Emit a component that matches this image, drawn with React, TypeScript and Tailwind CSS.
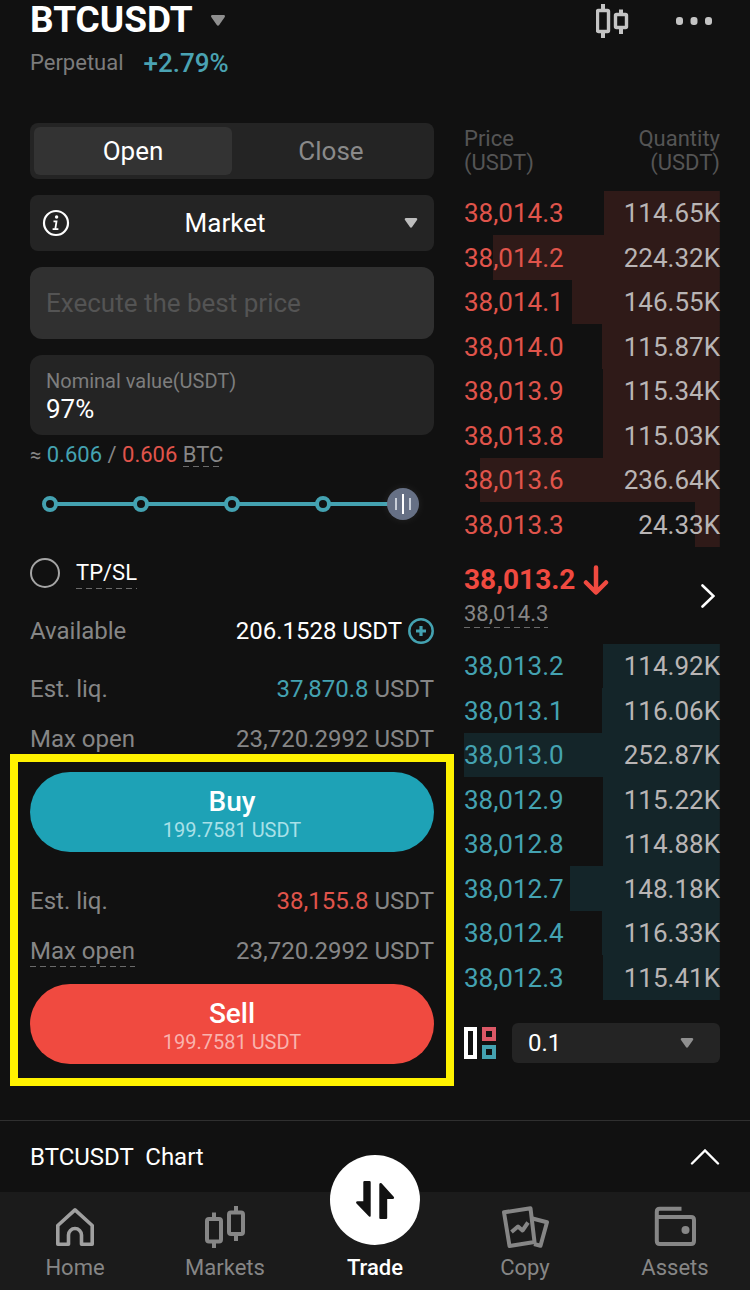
import { useState } from "react";
import type { ReactNode } from "react";

interface BookRow {
  price: string;
  quantity: number;
}

const ASKS: BookRow[] = [
  { price: "38,014.3", quantity: 114.65 },
  { price: "38,014.2", quantity: 224.32 },
  { price: "38,014.1", quantity: 146.55 },
  { price: "38,014.0", quantity: 115.87 },
  { price: "38,013.9", quantity: 115.34 },
  { price: "38,013.8", quantity: 115.03 },
  { price: "38,013.6", quantity: 236.64 },
  { price: "38,013.3", quantity: 24.33 },
];

const BIDS: BookRow[] = [
  { price: "38,013.2", quantity: 114.92 },
  { price: "38,013.1", quantity: 116.06 },
  { price: "38,013.0", quantity: 252.87 },
  { price: "38,012.9", quantity: 115.22 },
  { price: "38,012.8", quantity: 114.88 },
  { price: "38,012.7", quantity: 148.18 },
  { price: "38,012.4", quantity: 116.33 },
  { price: "38,012.3", quantity: 115.41 },
];

const MAX_QUANTITY = Math.max(...[...ASKS, ...BIDS].map((r) => r.quantity));

const STOPS = [0, 25, 50, 75];

function Caret({ className }: { className: string }) {
  return (
    <svg viewBox="0 0 14 11" className={className} aria-hidden>
      <path
        d="M1.5 0h11c1.3 0 1.9 1.2 1.1 2.2L8.2 10c-.6.9-1.8.9-2.4 0L.4 2.2C-.4 1.2.2 0 1.5 0z"
        fill="currentColor"
      />
    </svg>
  );
}

function Dashed({ children }: { children: ReactNode }) {
  return (
    <span className="inline-block bg-[repeating-linear-gradient(90deg,#6a6a6a_0_6px,transparent_6px_10px)] bg-[length:100%_1px] bg-bottom bg-no-repeat">
      {children}
    </span>
  );
}

function Header() {
  return (
    <header className="flex items-start justify-between px-[30px] pb-[45px]">
      <div>
        <button className="flex items-center gap-[18px] text-[37px] leading-10 font-bold text-white">
          BTCUSDT
          <Caret className="h-[11px] w-[14px] text-[#8f8f8f]" />
        </button>
        <div className="mt-2 flex items-center gap-5 leading-[30px]">
          <span className="text-[22px] text-[#7c7c7c]">Perpetual</span>
          <span className="text-[26px] font-medium text-[#4aa3b3]">+2.79%</span>
        </div>
      </div>
      <div className="flex h-[42px] items-center gap-[46px] pr-2 text-[#c4c4c4]">
        <button aria-label="Candlestick chart">
          <svg viewBox="0 0 34 36" className="h-9 w-[34px]" fill="none" stroke="currentColor">
            <rect x="1.5" y="7.5" width="11" height="21" rx="1" strokeWidth="3.4" />
            <rect x="19.5" y="11.5" width="11" height="13" rx="1" strokeWidth="3.4" />
            <path d="M7 1v6M7 29v6M25 6.500v5M25 25v6" strokeWidth="4" />
          </svg>
        </button>
        <button aria-label="More">
          <svg viewBox="0 0 36 8" className="h-2 w-9" fill="currentColor">
            <rect x="0" y="0" width="7" height="8" rx="3" />
            <rect x="14.500" y="0" width="7" height="8" rx="3" />
            <rect x="29" y="0" width="7" height="8" rx="3" />
          </svg>
        </button>
      </div>
    </header>
  );
}

interface StatRowProps {
  label: ReactNode;
  children: ReactNode;
}

function StatRow({ label, children }: StatRowProps) {
  return (
    <div className="flex h-8 items-center justify-between text-2xl leading-8 text-[#868686]">
      <span>{label}</span>
      <span>{children}</span>
    </div>
  );
}

function PercentSlider({ value, onChange }: { value: number; onChange: (v: number) => void }) {
  return (
    <div className="relative mx-5 mt-[19px] flex h-8 items-center">
      <div className="h-1 w-full">
        <div className="h-1 bg-[#44a2b1]" style={{ width: `${value}%` }} />
      </div>
      {STOPS.map((stop) => (
        <span
          key={stop}
          className="absolute size-4 -translate-x-1/2 rounded-full border-4 border-[#44a2b1] bg-[#111111]"
          style={{ left: `${stop}%` }}
        />
      ))}
      <span
        className="absolute flex size-8 -translate-x-1/2 items-center justify-center gap-[5px] rounded-full bg-[#667085] shadow-[0_0_10px_rgba(255,255,255,0.08)]"
        style={{ left: `${value}%` }}
      >
        <span className="h-3 w-0.5 bg-[#c8ced8]" />
        <span className="h-5 w-0.5 bg-white" />
        <span className="h-3 w-0.5 bg-[#c8ced8]" />
      </span>
      <input
        type="range"
        min={0}
        max={100}
        value={value}
        onChange={(e) => onChange(Number(e.target.value))}
        aria-label="Position size"
        className="absolute inset-0 w-full cursor-pointer opacity-0"
      />
    </div>
  );
}

function OrderForm() {
  const [side, setSide] = useState("Open");
  const [percent, setPercent] = useState(97);

  return (
    <section className="min-w-0" aria-label="Order">
      <div className="grid h-14 grid-cols-2 rounded-lg bg-[#242424] p-1 text-[26px]">
        {["Open", "Close"].map((name) => (
          <button
            key={name}
            onClick={() => setSide(name)}
            className={
              side === name
                ? "rounded-md bg-[#333333] text-white"
                : "rounded-md text-[#8a8a8a]"
            }
          >
            {name}
          </button>
        ))}
      </div>

      <div className="relative mt-4">
        <select
          aria-label="Order type"
          className="h-14 w-full appearance-none rounded-lg bg-[#242424] pr-[14px] text-[26px] text-white [text-align-last:center]"
        >
          <option>Market</option>
        </select>
        <svg
          viewBox="0 0 28 28"
          className="pointer-events-none absolute top-[14px] left-3 size-7 text-white"
          fill="none"
          stroke="currentColor"
          aria-hidden
        >
          <circle cx="14" cy="14" r="12" strokeWidth="2.200" />
          <circle cx="14.600" cy="8" r="1.700" fill="currentColor" stroke="none" />
          <path d="M11.500 12.300h3l-1.200 7.700M10.600 20.200h5.800" strokeWidth="1.800" />
        </svg>
        <Caret className="pointer-events-none absolute top-[23px] right-4 h-[10px] w-[14px] text-[#bdbdbd]" />
      </div>

      <input
        type="text"
        disabled
        aria-label="Price"
        placeholder="Execute the best price"
        className="mt-4 block h-[72px] w-full rounded-xl bg-[#303030] px-4 text-[26px] placeholder:text-[#545454]"
      />

      <div className="mt-4 h-20 rounded-xl bg-[#242424] px-4 pt-3">
        <label htmlFor="nominal" className="block text-xl leading-7 text-[#7d7d7d]">
          Nominal value(USDT)
        </label>
        <input
          id="nominal"
          type="text"
          value={`${percent}%`}
          onChange={(e) => setPercent(Math.min(100, parseInt(e.target.value, 10) || 0))}
          className="block h-7 w-full bg-transparent text-[26px] text-white outline-none"
        />
      </div>

      <p className="mt-1.5 text-[22px] leading-6 text-[#868686]">
        <span className="text-xl">≈</span> <span className="text-[#44a2b1]">0.606</span> /{" "}
        <span className="text-[#e0544b]">0.606</span> <Dashed>BTC</Dashed>
      </p>

      <PercentSlider value={percent} onChange={setPercent} />

      <label className="mt-[37px] flex h-8 items-center gap-4 text-[22px] leading-8 text-white">
        <input
          type="checkbox"
          className="size-[30px] appearance-none rounded-full border-2 border-[#a5a5a5] checked:bg-[#1ea2b6]"
        />
        <Dashed>TP/SL</Dashed>
      </label>

      <div className="mt-[26px]">
        <StatRow label="Available">
          <span className="flex items-center gap-[6px] text-white">
            206.1528 USDT
            <button aria-label="Deposit" className="text-[#44a2b1]">
              <svg viewBox="0 0 26 26" className="size-[26px]" fill="none" stroke="currentColor">
                <circle cx="13" cy="13" r="11.700" strokeWidth="2.500" />
                <path d="M13 8v10M8 13h10" strokeWidth="3.200" />
              </svg>
            </button>
          </span>
        </StatRow>
      </div>

      <div className="mt-[26px] mb-[17px] flex flex-col gap-[18px]">
        <StatRow label="Est. liq.">
          <span className="text-[#44a2b1]">37,870.8</span> USDT
        </StatRow>
        <StatRow label="Max open">23,720.2992 USDT</StatRow>
      </div>

      <div className="relative">
        <button className="block h-20 w-full rounded-full bg-[#1ea2b6] pt-1">
          <span className="block text-[28px] leading-8 font-medium text-white">Buy</span>
          <span className="block text-xl leading-6 text-[#a9e0e8]">199.7581 USDT</span>
        </button>
        <div className="mt-[33px] mb-[17px] flex flex-col gap-[18px]">
          <StatRow label="Est. liq.">
            <span className="text-[#e0544b]">38,155.8</span> USDT
          </StatRow>
          <StatRow label={<Dashed>Max open</Dashed>}>23,720.2992 USDT</StatRow>
        </div>
        <button className="block h-20 w-full rounded-full bg-[#f04a40] pt-1">
          <span className="block text-[28px] leading-8 font-medium text-white">Sell</span>
          <span className="block text-xl leading-6 text-[#f9b3ae]">199.7581 USDT</span>
        </button>
        {/* highlight frame over both order buttons */}
        <div className="pointer-events-none absolute -inset-x-5 -top-[18px] -bottom-[22px] border-8 border-[#fff200]" />
      </div>
    </section>
  );
}

function BookRows({ rows, bar, text }: { rows: BookRow[]; bar: string; text: string }) {
  return (
    <tbody className="text-[26px] leading-8">
      {rows.map((row) => {
        const pct = (row.quantity / MAX_QUANTITY) * 100;
        return (
          <tr
            key={row.price}
            className="h-11 even:h-[45px]"
            style={{
              backgroundImage: `linear-gradient(to left, ${bar} ${pct}%, transparent ${pct}%)`,
            }}
          >
            <td className={text}>{row.price}</td>
            <td className="text-right text-[#b9b5b5]">{row.quantity.toFixed(2)}K</td>
          </tr>
        );
      })}
    </tbody>
  );
}

function OrderBook() {
  return (
    <section className="min-w-0" aria-label="Order book">
      <table className="w-full border-collapse">
        <thead className="text-[22px] leading-6 text-[#555555]">
          <tr>
            <th className="pt-1 pb-4 text-left font-normal">
              Price
              <br />
              (USDT)
            </th>
            <th className="pt-1 pb-4 text-right font-normal">
              Quantity
              <br />
              (USDT)
            </th>
          </tr>
        </thead>
        <BookRows rows={ASKS} bar="#2f1a18" text="text-[#e0544b]" />
        <tbody>
          <tr className="h-[97px]">
            <td colSpan={2} className="align-top">
              <div className="flex items-center justify-between pt-[17px]">
                <div>
                  <div className="flex items-center gap-2 text-[28px] leading-8 font-bold text-[#f04a40]">
                    38,013.2
                    <svg
                      viewBox="0 0 26 30"
                      className="h-[30px] w-[26px]"
                      fill="none"
                      stroke="currentColor"
                      strokeWidth="4.500"
                      strokeLinecap="round"
                      strokeLinejoin="round"
                      aria-hidden
                    >
                      <path d="M13 2.500v24M3 17.500l10 10 10-10" />
                    </svg>
                  </div>
                  <div className="mt-1 text-[22px] leading-7 text-[#868686]">
                    <Dashed>38,014.3</Dashed>
                  </div>
                </div>
                <button aria-label="Full order book" className="pr-[5px] text-white">
                  <svg
                    viewBox="0 0 14 24"
                    className="h-6 w-[14px]"
                    fill="none"
                    stroke="currentColor"
                    strokeWidth="2.600"
                    strokeLinecap="round"
                  >
                    <path d="M1.500 1.500L12.500 12L1.500 22.500" />
                  </svg>
                </button>
              </div>
            </td>
          </tr>
        </tbody>
        <BookRows rows={BIDS} bar="#142529" text="text-[#44a2b1]" />
      </table>

      <div className="mt-[23px] flex items-center gap-4">
        <button aria-label="Order book layout">
          <svg viewBox="0 0 32 32" className="size-8" fill="none" strokeWidth="4">
            <rect x="2" y="2" width="9" height="28" stroke="#ffffff" />
            <rect x="20" y="2" width="10" height="10" stroke="#dc5866" />
            <rect x="20" y="20" width="10" height="10" stroke="#44a2b1" />
          </svg>
        </button>
        <div className="relative flex-1">
          <select
            aria-label="Price step"
            className="block h-10 w-full appearance-none rounded-md bg-[#242424] px-4 text-2xl text-white"
          >
            <option>0.1</option>
          </select>
          <Caret className="pointer-events-none absolute top-[15px] right-[26px] h-[10px] w-[14px] text-[#8f8f8f]" />
        </div>
      </div>
    </section>
  );
}

interface NavItemProps {
  label: string;
  active?: boolean;
  children: ReactNode;
}

function NavItem({ label, active, children }: NavItemProps) {
  return (
    <a
      href="#"
      className={
        active
          ? "flex flex-col items-center pt-[14px] text-[22px] leading-7 font-medium text-white"
          : "flex flex-col items-center pt-[14px] text-[22px] leading-7 text-[#868686]"
      }
    >
      {children}
      <span className="mt-2">{label}</span>
    </a>
  );
}

function BottomNav() {
  return (
    <nav className="grid h-[98px] grid-cols-5 bg-[#1b1b1b]">
      <NavItem label="Home">
        <svg
          viewBox="0 0 40 40"
          className="size-10 text-[#a0a0a0]"
          fill="none"
          stroke="currentColor"
          strokeWidth="3.600"
          strokeLinejoin="round"
        >
          <path d="M2.800 19.500L20 3.800l17.200 15.700v18.700H26.500V29a6.500 6.500 0 0 0-13 0v9.200H2.800z" />
        </svg>
      </NavItem>
      <NavItem label="Markets">
        <svg
          viewBox="0 0 40 42"
          className="-mb-0.5 h-[42px] w-10"
          fill="none"
          stroke="currentColor"
          strokeWidth="4"
        >
          <rect x="2" y="13" width="14" height="22.500" rx="2" />
          <rect x="24" y="6.500" width="14" height="21.500" rx="2" />
          <path d="M9 6.500v5M9 37v5M31 0v5M31 29v6" />
        </svg>
      </NavItem>
      <NavItem label="Trade" active>
        <span className="-mt-[51px] mb-px flex size-[90px] items-center justify-center rounded-full bg-white text-[#111111]">
          <svg viewBox="0 0 40 40" className="size-10" fill="currentColor">
            <path d="M9.500 1H14.500Q15.700 1 15.700 2.200V35.500Q15.700 37.800 13.800 36.200L1.500 23.500Q.3 21.500 2.500 21.200H8.300V2.200Q8.300 1 9.500 1z" />
            <path d="M24.300 38Q24.300 39 25.500 39H31Q32.200 39 32.200 38V19H37.600Q39.900 18.700 38.700 16.800L26.500 3.300Q24.300 2.200 24.300 4.500z" />
          </svg>
        </span>
      </NavItem>
      <NavItem label="Copy">
        <svg
          viewBox="0 0 48 42"
          className="-mb-0.5 h-[42px] w-12"
          fill="none"
          stroke="currentColor"
          strokeWidth="4"
          strokeLinejoin="round"
        >
          <path d="M3 6.300L29.500 2.200L33.500 36L8.500 40z" />
          <path d="M31.500 12.500L46 16.300L39.500 39.800L33 38" />
          <path d="M10.500 26L17 20.500l4.500 4L27 16.500" />
        </svg>
      </NavItem>
      <NavItem label="Assets">
        <svg
          viewBox="0 0 42 40"
          className="h-10 w-[42px]"
          fill="none"
          stroke="currentColor"
          strokeWidth="4"
        >
          <path d="M27.500 2.800H5.800Q2.800 2.800 2.800 5.800V35Q2.800 38 5.800 38H37Q40 38 40 35V14Q40 11 37 11H2.800" />
          <circle cx="31.500" cy="24" r="4" fill="currentColor" stroke="none" />
        </svg>
      </NavItem>
    </nav>
  );
}

export default function App() {
  return (
    <div className="min-h-screen bg-[#111111] font-[Roboto,'Noto_Sans',sans-serif]">
      <Header />
      <main className="grid grid-cols-[404fr_256fr] gap-[30px] px-[30px] pb-14">
        <OrderForm />
        <OrderBook />
      </main>
      <button className="flex h-[72px] w-full items-center justify-between border-t border-[#303030] px-[30px] text-2xl text-white">
        <span className="whitespace-pre">BTCUSDT  Chart</span>
        <svg
          viewBox="0 0 30 16"
          className="h-4 w-[30px]"
          fill="none"
          stroke="currentColor"
          strokeWidth="2.400"
          strokeLinecap="round"
          aria-hidden
        >
          <path d="M2 14.500L15 1.500L28 14.500" />
        </svg>
      </button>
      <BottomNav />
    </div>
  );
}
